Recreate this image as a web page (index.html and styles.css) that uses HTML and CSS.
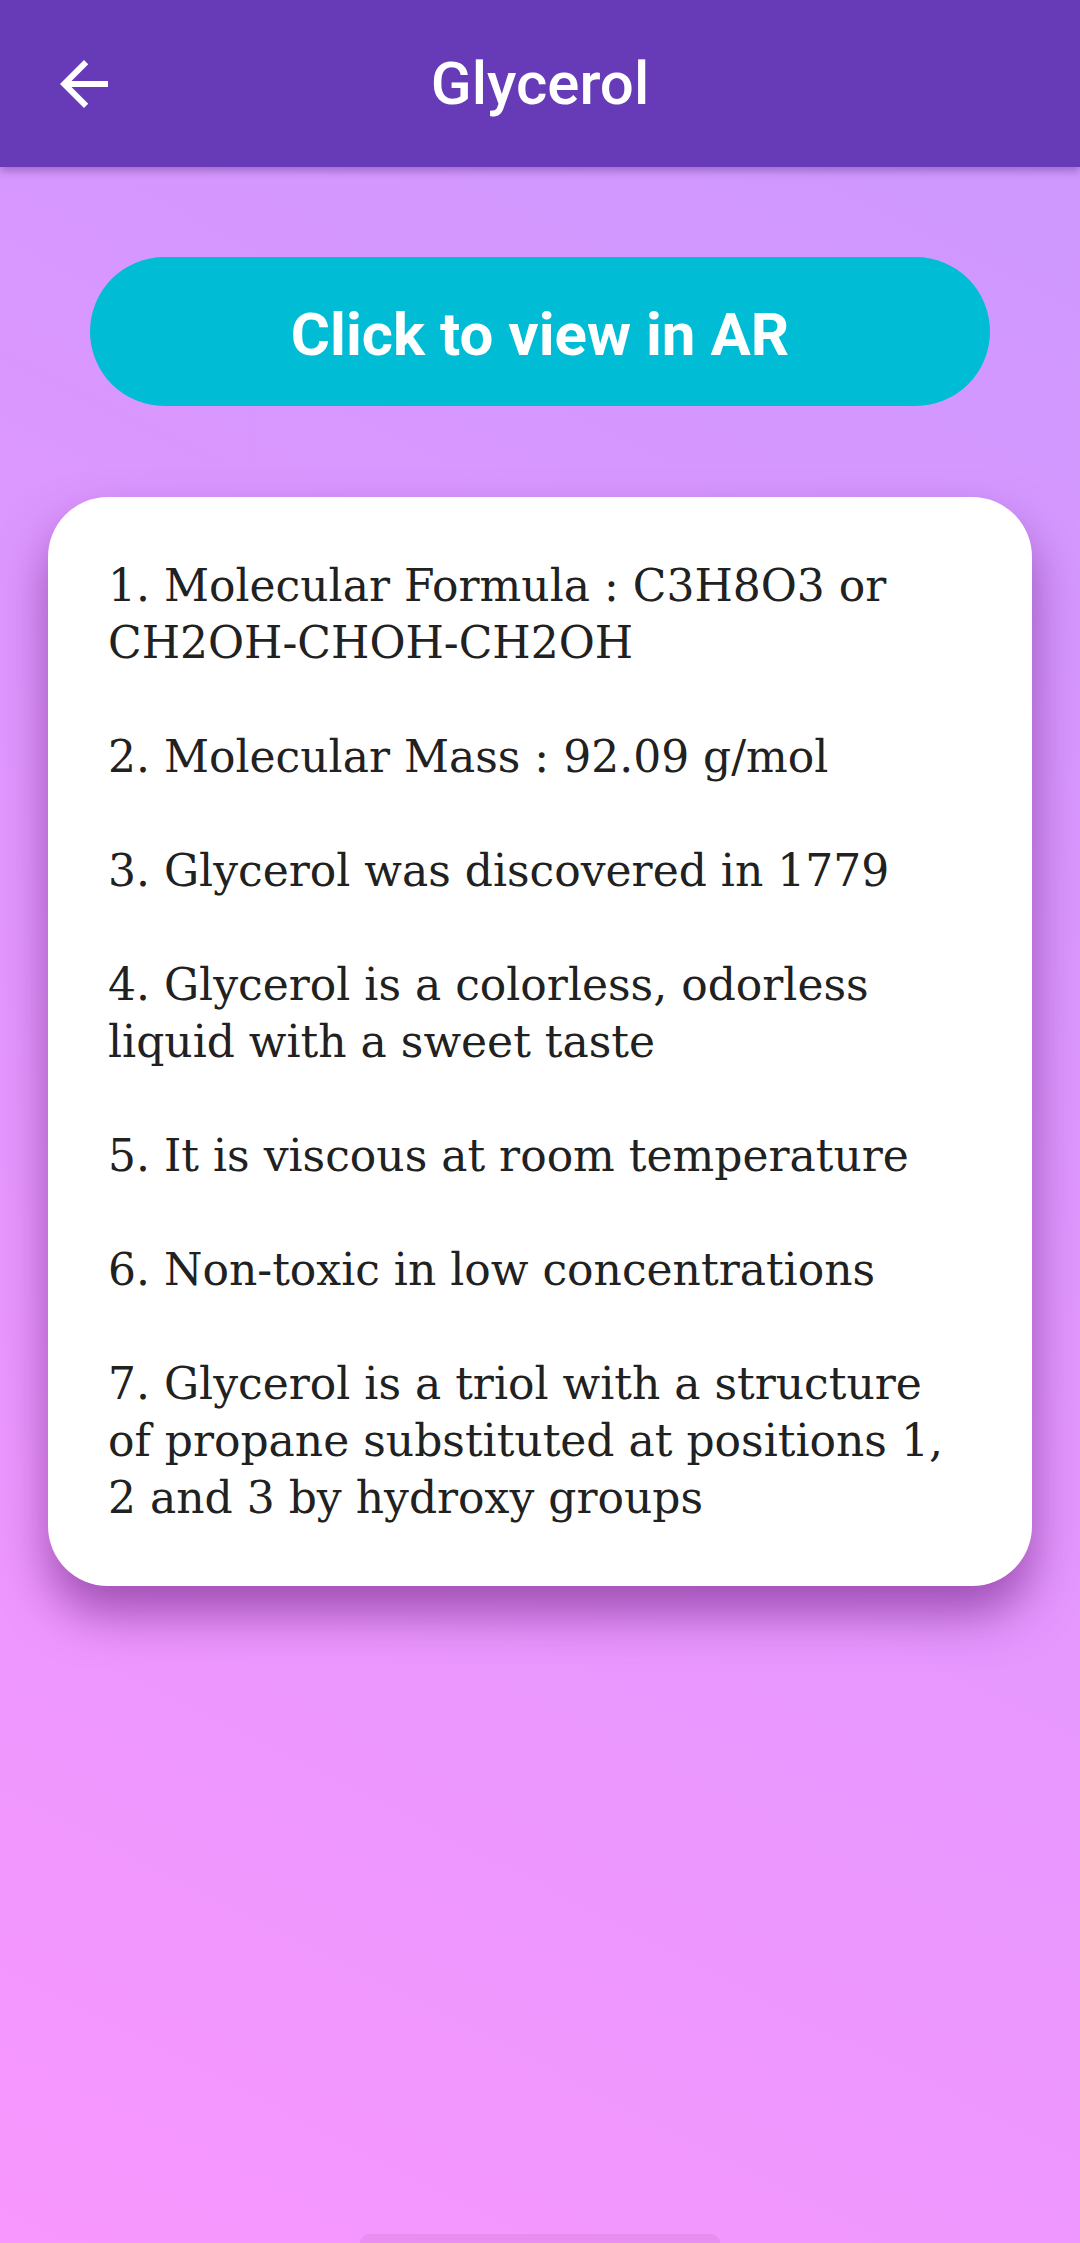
FILE: index.html
```html
<!DOCTYPE html>
<html>
<head>
<meta charset="utf-8">
<link rel="stylesheet" href="styles.css">
</head>
<body>
<div class="screen">
  <header class="appbar">
    <button class="back" aria-label="Back">
      <svg viewBox="0 0 24 24" width="72" height="72"><path d="M20 11H7.83l5.59-5.59L12 4l-8 8 8 8 1.41-1.41L7.83 13H20v-2z" fill="#fff"/></svg>
    </button>
    <h1 class="title">Glycerol</h1>
  </header>
  <main class="content">
    <button class="ar-btn">Click to view in AR</button>
    <section class="card">
      <p class="info">1. Molecular Formula : C3H8O3 or CH2OH-CHOH-CH2OH</p>
      <p class="info">2. Molecular Mass : 92.09 g/mol</p>
      <p class="info">3. Glycerol was discovered in 1779</p>
      <p class="info">4. Glycerol is a colorless, odorless liquid with a sweet taste</p>
      <p class="info">5. It is viscous at room temperature</p>
      <p class="info">6. Non-toxic in low concentrations</p>
      <p class="info">7. Glycerol is a triol with a structure of propane substituted at positions 1, 2 and 3 by hydroxy groups</p>
    </section>
  </main>
  <div class="gesture"></div>
</div>
</body>
</html>
```
FILE: styles.css
```css
html, body {
  margin: 0;
  padding: 0;
}
body {
  width: 1080px;
  height: 2243px;
  overflow: hidden;
  background: linear-gradient(207deg, #cb98fe 0%, #f897fe 100%);
  font-family: Roboto, "Liberation Sans", sans-serif;
}
.screen {
  position: relative;
  height: 2243px;
  display: flex;
  flex-direction: column;
}
.appbar {
  height: 167px;
  background: #673ab7;
  box-shadow: 0 4px 8px rgba(40, 0, 80, 0.3);
  display: flex;
  align-items: center;
  position: relative;
  z-index: 2;
}
.back {
  margin-left: 48px;
  width: 72px;
  height: 72px;
  padding: 0;
  border: 0;
  background: none;
  display: flex;
}
.title {
  position: absolute;
  left: 0;
  right: 0;
  margin: 0;
  text-align: center;
  color: #fff;
  font-family: Roboto, sans-serif;
  font-weight: 500;
  font-size: 60px;
  line-height: 167px;
  top: 0;
  pointer-events: none;
}
.content {
  display: flex;
  flex-direction: column;
  align-items: center;
  padding-top: 90px;
}
.ar-btn {
  width: 900px;
  height: 149px;
  border: 0;
  border-radius: 75px;
  background: #00bcd4;
  color: #fff;
  font-family: Roboto, sans-serif;
  font-weight: 700;
  font-size: 60px;
  padding: 6px 0 0 0;
}
.card {
  margin-top: 91px;
  width: 984px;
  box-sizing: border-box;
  padding: 60px;
  background: #fff;
  border-radius: 60px;
  box-shadow: 0 28px 48px rgba(100, 20, 120, 0.55);
  display: flex;
  flex-direction: column;
  gap: 57px;
}
.info {
  margin: 0;
  font-family: "DejaVu Serif", "Liberation Serif", serif;
  font-size: 44px;
  line-height: 57px;
  color: #212121;
}
.gesture {
  position: absolute;
  left: 360px;
  width: 360px;
  bottom: -10px;
  height: 19px;
  border-radius: 10px;
  background: rgba(160, 80, 150, 0.12);
}
```
